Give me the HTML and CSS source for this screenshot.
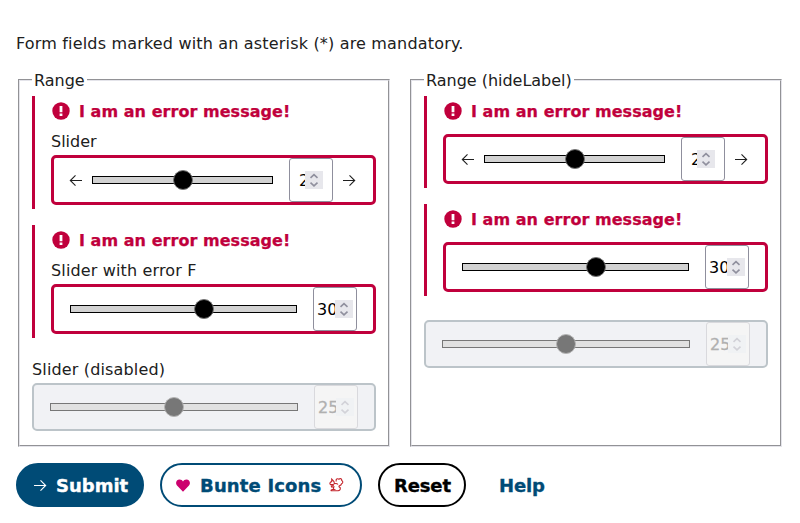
FILE: index.html
```html
<!DOCTYPE html>
<html lang="en">
<head>
<meta charset="utf-8">
<title>Range</title>
<link rel="stylesheet" href="styles.css">
</head>
<body>
<svg class="defs" width="0" height="0">
  <symbol id="alert" viewBox="0 0 18 18"><circle cx="9" cy="9" r="8.7" fill="currentColor"/><path d="M7.6 4h2.8v6.2H7.6zM7.6 11.5h2.8v2.400H7.6z" fill="#fff"/></symbol>
  <symbol id="left" viewBox="0 0 14 14"><path d="M13 7.500H1.5M6.5 2.300L1.3 7.500l5.2 5.2" fill="none" stroke="currentColor" stroke-width="1.1"/></symbol>
  <symbol id="right" viewBox="0 0 14 14"><path d="M1 7.500h11.5M7.5 2.300L12.7 7.500l-5.2 5.2" fill="none" stroke="currentColor" stroke-width="1.1"/></symbol>
  <symbol id="spin" viewBox="0 0 18 18"><path d="M5.5 6.8L9 3.6l3.5 3.2M5.5 11.6L9 14.8l3.5-3.2" fill="none" stroke="currentColor" stroke-width="1.6"/></symbol>
</svg>
<p class="hint">Form fields marked with an asterisk (*) are mandatory.</p>
<form>
  <div class="columns">
    <fieldset>
      <legend>Range</legend>
      <div class="field error">
        <div class="message"><svg><use href="#alert"/></svg><span>I am an error message!</span></div>
        <div class="label short">Slider</div>
        <div class="box">
          <svg class="arrow"><use href="#left"/></svg>
          <div class="track"><i class="thumb mid"></i></div>
          <div class="number inset"><span>2</span><svg><use href="#spin"/></svg></div>
          <svg class="arrow"><use href="#right"/></svg>
        </div>
      </div>
      <div class="field error">
        <div class="message"><svg><use href="#alert"/></svg><span>I am an error message!</span></div>
        <div class="label">Slider with error F</div>
        <div class="box">
          <div class="track"><i class="thumb far"></i></div>
          <div class="number"><span>30</span><svg><use href="#spin"/></svg></div>
        </div>
      </div>
      <div class="field disabled">
        <div class="label">Slider (disabled)</div>
        <div class="box">
          <div class="track"><i class="thumb mid"></i></div>
          <div class="number"><span>25</span><svg><use href="#spin"/></svg></div>
        </div>
      </div>
    </fieldset>
    <fieldset>
      <legend>Range (hideLabel)</legend>
      <div class="field error unlabeled">
        <div class="message"><svg><use href="#alert"/></svg><span>I am an error message!</span></div>
        <div class="box">
          <svg class="arrow"><use href="#left"/></svg>
          <div class="track"><i class="thumb mid"></i></div>
          <div class="number inset"><span>2</span><svg><use href="#spin"/></svg></div>
          <svg class="arrow"><use href="#right"/></svg>
        </div>
      </div>
      <div class="field error unlabeled">
        <div class="message"><svg><use href="#alert"/></svg><span>I am an error message!</span></div>
        <div class="box">
          <div class="track"><i class="thumb far"></i></div>
          <div class="number"><span>30</span><svg><use href="#spin"/></svg></div>
        </div>
      </div>
      <div class="field disabled unlabeled">
        <div class="box">
          <div class="track"><i class="thumb mid"></i></div>
          <div class="number"><span>25</span><svg><use href="#spin"/></svg></div>
        </div>
      </div>
    </fieldset>
  </div>
  <div class="actions">
    <button type="button" class="primary"><svg class="arrow"><use href="#right"/></svg><span>Submit</span></button>
    <button type="button" class="secondary"><svg class="heart" viewBox="0 0 14 13"><path d="M7 12.7L1 6.6C-1 4 .4.4 3.6.4 5.2.4 6.4 1.3 7 2.4 7.6 1.3 8.8.4 10.4.4 13.6.4 15 4 13 6.6z" fill="#cc006e"/></svg><span>Bunte Icons</span><svg class="squirrel" viewBox="0 0 16 16"><path d="M8.300 4.500C7.300 2 9.500 1.200 11 2.200 12.500.8 14 2.200 13.700 3.500 15.400 4.300 15 6.300 13.500 6.800 13.300 8.200 12 8.500 11.200 8.800 10.500 9.500 11.300 10.200 12.200 10.600 12.800 12.500 11.500 13.500 10 13.800H3.500C2.500 13.500 3.200 12.500 4.500 12.500H6.300C5.200 11.800 5 10.800 5.800 10H3.500L3.300 8.800H5.200V7.500H2.300C1.300 6.300 2.200 5 3.700 4.600V2.200L5.500 4C6.500 4.800 6.300 6 6.200 6.800 8 6.300 9.200 6.500 10 7.500" fill="none" stroke="#c4242b" stroke-width="1.1"/></svg></button>
    <button type="button" class="normal"><span>Reset</span></button>
    <button type="button" class="ghost"><span>Help</span></button>
  </div>
</form>
</body>
</html>
```
FILE: styles.css
```css
* { box-sizing: border-box; }
body { margin: 0; padding: 34px 16px 0; background: #fff; color: #202020; font: 16px/20px Verdana, "DejaVu Sans", sans-serif; white-space: nowrap; }
.defs { display: block; }
svg { flex: none; }
.hint { margin: 0 0 16px; letter-spacing: .175px; }
.columns { display: flex; gap: 20px; margin: 0 2px; }
fieldset { width: 372px; height: 377px; margin: 0; padding: 6px 12px 0; border: 2px groove #e4e4ea; }
legend { padding: 0 2px; height: 20px; line-height: 22px; letter-spacing: -.02px; }
.field { margin-bottom: 16px; }
.error { height: 113px; border-left: 3px solid #c0003c; padding-left: 16px; }
.error.unlabeled { height: 92px; }
.message { display: flex; align-items: center; gap: 9px; height: 30px; padding-left: 1px; color: #c0003c; font-weight: bold; letter-spacing: .04px; -webkit-text-stroke: .25px; }
.message span { padding-top: 2px; }
.message svg { width: 18px; height: 18px; }
.label { height: 29px; padding-top: 6px; letter-spacing: .15px; }
.short { letter-spacing: 0; }
.unlabeled .message { height: 30px; margin-bottom: 8px; }
.box { display: flex; align-items: center; height: 50px; border: 3px solid #c0003c; border-radius: 5px; padding: 0 16px; }
.arrow { width: 14px; height: 14px; margin-left: -1px; }
.arrow + .track { margin-left: 9px; }
.track { flex: 1; position: relative; height: 8px; margin-right: 16px; border: 1px solid #000; background: #d2d2d2; }
.thumb { position: absolute; top: -7px; width: 20px; height: 20px; border: 1px solid #777; border-radius: 50%; background: #000; }
.mid { left: calc(50% - 10px); }
.far { left: calc(59% - 10px); }
.number { position: relative; width: 44px; height: 44px; padding: 12px 0 0 3px; border: 1px solid #8f8f9d; border-radius: 3px; color: #000; }
.number svg { position: absolute; left: 21px; top: 12px; width: 18px; height: 18px; background: #e7e7ec; color: #8f8f9d; }
.number.inset { padding-left: 9px; }
.inset svg { left: 15px; }
.inset + .arrow { margin-left: 9px; margin-right: 1px; }
.disabled .box { height: 48px; border: 2px solid #bcc4c9; background: #f1f2f5; }
.disabled .track { background: #e1e1e1; border-color: #777; }
.disabled .thumb { background: #777; border-color: #b4b4b4; }
.disabled .number { background: #f5f5f5; border-color: #d9d9dd; color: #b0b0b0; -webkit-text-stroke: .3px; }
.disabled .number svg { background: #f0f2f4; color: #d2d2d8; }
.disabled.unlabeled { padding-top: 8px; }
.actions { display: flex; gap: 16px; margin-top: 16px; }
button { display: flex; align-items: center; height: 44px; padding: 0 14px; border: 2px solid; border-radius: 22px; background: #fff; font: bold 18px/20px Verdana, "DejaVu Sans", sans-serif; color: #004b76; white-space: nowrap; -webkit-text-stroke: .35px; }
button span { padding-top: 2px; letter-spacing: -.15px; }
.primary { width: 128px; background: #004b76; border-color: #004b76; color: #fff; padding-left: 16px; }
.primary span { margin-left: 9px; letter-spacing: 0; }
.secondary { width: 202px; border-color: #004b76; }
.heart { width: 14px; height: 13px; }
.secondary span { margin-left: 10px; letter-spacing: .16px; }
.squirrel { width: 16px; height: 16px; margin-left: 7px; }
.normal { width: 88px; color: #000; border-color: #000; }
.ghost { border-color: transparent; padding: 0 15px; }
```
